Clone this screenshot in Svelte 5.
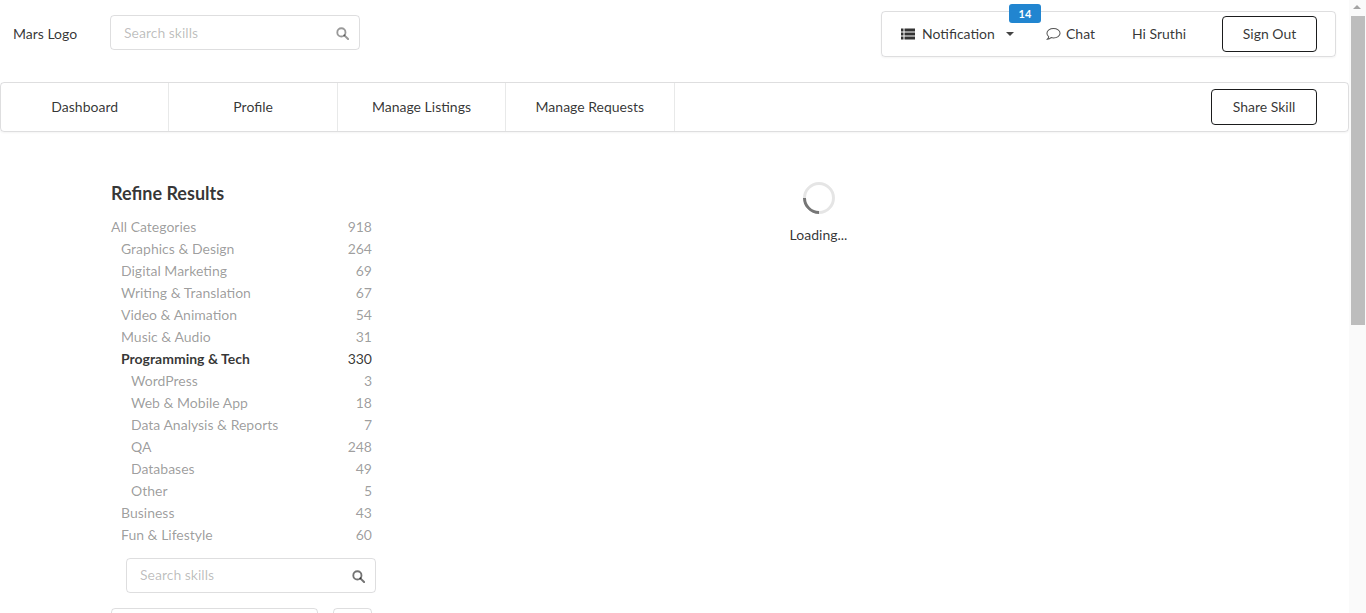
<script>
  const categories = [
    { name: "All Categories", count: 918, level: 0 },
    { name: "Graphics & Design", count: 264, level: 1 },
    { name: "Digital Marketing", count: 69, level: 1 },
    { name: "Writing & Translation", count: 67, level: 1 },
    { name: "Video & Animation", count: 54, level: 1 },
    { name: "Music & Audio", count: 31, level: 1 },
    { name: "Programming & Tech", count: 330, level: 1, active: true },
    { name: "WordPress", count: 3, level: 2 },
    { name: "Web & Mobile App", count: 18, level: 2 },
    { name: "Data Analysis & Reports", count: 7, level: 2 },
    { name: "QA", count: 248, level: 2 },
    { name: "Databases", count: 49, level: 2 },
    { name: "Other", count: 5, level: 2 },
    { name: "Business", count: 43, level: 1 },
    { name: "Fun & Lifestyle", count: 60, level: 1 }
  ];
  const tabs = ["Dashboard", "Profile", "Manage Listings", "Manage Requests"];
</script>

{#snippet searchIcon()}
  <svg class="search-icon" viewBox="0 0 14 14" width="13" height="13" aria-hidden="true">
    <circle cx="5.8" cy="5.8" r="4.4" fill="none" stroke="currentColor" stroke-width="2" />
    <path d="M9 9l4 4" stroke="currentColor" stroke-width="2.2" stroke-linecap="round" />
  </svg>
{/snippet}

<div class="window">
  <div class="page">
    <header class="top">
      <span class="logo">Mars Logo</span>
      <div class="search top-search">
        <span class="placeholder">Search skills</span>
        {@render searchIcon()}
      </div>
      <nav class="user-menu">
        <span class="notification">
          <svg viewBox="0 0 14 12" width="14" height="12" aria-hidden="true">
            <path d="M0 .5h2.500v3H0zM3.500 .5H14v3H3.500zM0 4.500h2.500v3H0zM3.500 4.500H14v3H3.500zM0 8.500h2.500v3H0zM3.500 8.500H14v3H3.500z" fill="#333" />
          </svg>
          <span>Notification</span>
          <i class="caret"></i>
          <b class="badge">14</b>
        </span>
        <span class="chat">
          <svg viewBox="0 0 16 14" width="15" height="14" aria-hidden="true">
            <path d="M8 1.200c3.800 0 7 2.200 7 5s-3.200 5-7 5c-.9 0-1.800-.1-2.600-.4-1 .9-2.300 1.500-3.900 1.700.8-.8 1.300-1.700 1.400-2.600C1.800 9 1 7.700 1 6.200c0-2.800 3.200-5 7-5z" fill="none" stroke="#555" stroke-width="1.100" />
          </svg>
          <span>Chat</span>
        </span>
        <span class="greeting">Hi Sruthi</span>
        <button class="outline sign-out">Sign Out</button>
      </nav>
    </header>

    <nav class="tabs">
      {#each tabs as tab}
        <a class="tab" href="#top">{tab}</a>
      {/each}
      <button class="outline share">Share Skill</button>
    </nav>

    <main class="content">
      <aside class="filters">
        <h3>Refine Results</h3>
        <ul>
          {#each categories as cat}
            <li class:active={cat.active} class="level-{cat.level}">
              <span>{cat.name}</span>
              <span>{cat.count}</span>
            </li>
          {/each}
        </ul>
        <div class="search side-search">
          <span class="placeholder">Search skills</span>
          {@render searchIcon()}
        </div>
        <div class="pager">
          <div class="box wide"></div>
          <div class="box narrow"></div>
        </div>
      </aside>
      <section class="results">
        <div class="spinner"></div>
        <div class="loading">Loading...</div>
      </section>
    </main>
  </div>
  <div class="scrollbar">
    <div class="arrow"></div>
    <div class="thumb"></div>
  </div>
</div>

<style>
  :global(body) {
    margin: 0;
    background: #fff;
    overflow: hidden;
  }
  .window {
    display: flex;
    height: 613px;
    overflow: hidden;
    font-family: Lato, "Open Sans", sans-serif;
    font-size: 14px;
    line-height: 20px;
    color: rgba(0, 0, 0, 0.8);
  }
  .page {
    flex: 1;
    min-width: 0;
  }
  .top {
    display: flex;
    align-items: flex-start;
    height: 82px;
    box-sizing: border-box;
    padding: 11px 13px 0 13px;
  }
  .logo {
    width: 97px;
    flex: none;
    margin-top: 13px;
  }
  .search {
    display: flex;
    align-items: center;
    justify-content: space-between;
    box-sizing: border-box;
    height: 35px;
    border: 1px solid rgba(34, 36, 38, 0.15);
    border-radius: 4px;
    padding: 0 10px 0 13px;
  }
  .placeholder {
    color: rgba(0, 0, 0, 0.27);
  }
  .search-icon {
    margin-top: 2px;
  }
  .top-search {
    width: 250px;
    margin-top: 4px;
    color: rgba(0, 0, 0, 0.4);
  }
  .user-menu {
    display: flex;
    align-items: center;
    box-sizing: border-box;
    width: 455px;
    height: 46px;
    margin-left: auto;
    padding: 0 18px 0 19px;
    border: 1px solid rgba(34, 36, 38, 0.15);
    border-radius: 4px;
    box-shadow: 0 1px 2px rgba(34, 36, 38, 0.05);
  }
  .notification {
    position: relative;
    display: flex;
    align-items: center;
    gap: 7px;
    width: 145px;
    flex: none;
  }
  .caret {
    width: 0;
    height: 0;
    margin-left: 4px;
    border: 4px solid transparent;
    border-top-color: #444;
    border-bottom: 0;
  }
  .badge {
    position: absolute;
    top: -20px;
    left: 108px;
    width: 32px;
    height: 19px;
    border-radius: 3px;
    background: #2185d0;
    color: #fff;
    font-size: 11px;
    line-height: 19px;
    text-align: center;
    font-weight: 700;
  }
  .chat {
    display: flex;
    align-items: center;
    gap: 5px;
    width: 86px;
    flex: none;
  }
  .greeting {
    width: 90px;
    flex: none;
  }
  .outline {
    box-sizing: border-box;
    height: 36px;
    border: 1px solid #1b1c1d;
    border-radius: 4px;
    background: #fff;
    font: inherit;
    color: rgba(0, 0, 0, 0.8);
    padding: 0;
    flex: none;
  }
  .sign-out {
    width: 95px;
  }
  .tabs {
    display: flex;
    align-items: center;
    box-sizing: border-box;
    height: 50px;
    border: 1px solid rgba(34, 36, 38, 0.15);
    border-radius: 4px;
    box-shadow: 0 1px 2px rgba(34, 36, 38, 0.05);
    padding-right: 31px;
  }
  .tab {
    width: 168.4px;
    height: 100%;
    display: flex;
    align-items: center;
    justify-content: center;
    border-right: 1px solid rgba(34, 36, 38, 0.1);
    color: rgba(0, 0, 0, 0.8);
    text-decoration: none;
    box-sizing: border-box;
  }
  .share {
    width: 106px;
    margin-left: auto;
  }
  .content {
    display: flex;
    padding: 48px 100px 0 111px;
  }
  .filters {
    width: 261px;
    flex: none;
  }
  h3 {
    margin: 0 0 10px;
    font-size: 18px;
    line-height: 26px;
    font-weight: 700;
  }
  ul {
    list-style: none;
    margin: 0;
    padding: 0;
  }
  li {
    display: flex;
    justify-content: space-between;
    height: 22px;
    line-height: 22px;
    color: rgba(0, 0, 0, 0.4);
  }
  .level-1 {
    padding-left: 10px;
  }
  .level-2 {
    padding-left: 20px;
  }
  li.active {
    color: rgba(0, 0, 0, 0.8);
  }
  li.active span:first-child {
    font-weight: 700;
  }
  .side-search {
    width: 250px;
    margin: 12px 0 0 15px;
    color: rgba(0, 0, 0, 0.55);
  }
  .side-search .placeholder {
    margin-top: -1px;
  }
  .pager {
    display: flex;
    justify-content: space-between;
    margin-top: 15px;
  }
  .box {
    box-sizing: border-box;
    height: 36px;
    border: 1px solid rgba(34, 36, 38, 0.15);
    border-radius: 4px;
  }
  .wide {
    width: 207px;
  }
  .narrow {
    width: 39px;
  }
  .results {
    flex: 1;
    display: flex;
    flex-direction: column;
    align-items: center;
    padding-top: 2px;
    margin-left: 16px;
  }
  .spinner {
    box-sizing: border-box;
    width: 32px;
    height: 32px;
    border-radius: 50%;
    border: 3px solid rgba(0, 0, 0, 0.1);
    border-left-color: #767676;
    transform: rotate(-45deg);
  }
  .loading {
    margin-top: 11px;
  }
  .scrollbar {
    width: 17px;
    flex: none;
    background: #fafafa;
  }
  .arrow {
    height: 16px;
    position: relative;
  }
  .arrow::after {
    content: "";
    position: absolute;
    left: 4px;
    top: 5px;
    border: 4px solid transparent;
    border-top: 0;
    border-bottom-color: #a3a3a3;
  }
  .thumb {
    height: 309px;
    margin: 0 1px 0 2px;
    background: #bdbdbd;
  }
</style>
